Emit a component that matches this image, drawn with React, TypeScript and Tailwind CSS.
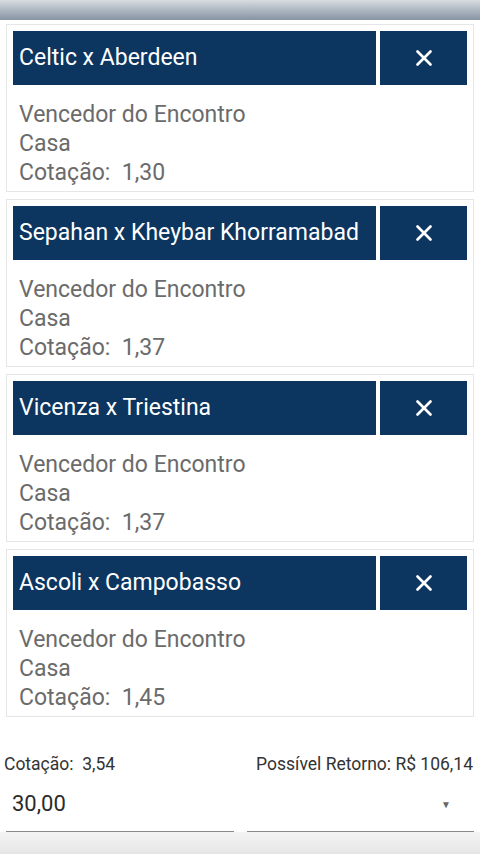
import { X } from "lucide-react";

const bets = [
  { match: "Celtic x Aberdeen", market: "Vencedor do Encontro", pick: "Casa", odd: "1,30" },
  { match: "Sepahan x Kheybar Khorramabad", market: "Vencedor do Encontro", pick: "Casa", odd: "1,37" },
  { match: "Vicenza x Triestina", market: "Vencedor do Encontro", pick: "Casa", odd: "1,37" },
  { match: "Ascoli x Campobasso", market: "Vencedor do Encontro", pick: "Casa", odd: "1,45" },
];

const BetCard = ({ match, market, pick, odd }: (typeof bets)[number]) => (
  <div className="border border-[#e6e6e6] px-[6px] pt-[6px] pb-[4px]">
    <div className="flex gap-[4px] h-[54px]">
      <div className="flex-1 bg-[#0c3560] text-white text-[23px] flex items-center pl-[6px] whitespace-nowrap overflow-hidden">
        {match}
      </div>
      <button className="w-[87px] bg-[#0c3560] text-white flex items-center justify-center">
        <X size={26} strokeWidth={2.5} />
      </button>
    </div>
    <div className="pl-[6px] pt-[15px] text-[#6b6b6b] text-[23px] leading-[29px]">
      <div>{market}</div>
      <div>{pick}</div>
      <div>Cotação:&nbsp; {odd}</div>
    </div>
  </div>
);

export default function App() {
  return (
    <div
      className="w-[480px] h-[854px] bg-white flex flex-col overflow-hidden"
      style={{ fontFamily: "Roboto, 'Noto Sans', sans-serif" }}
    >
      <div className="h-[20px] bg-gradient-to-b from-[#d7dce1] to-[#8794a2]" />
      <div className="px-[6px] pt-[4px] flex flex-col gap-[7px]">
        {bets.map((b) => (
          <BetCard key={b.match} {...b} />
        ))}
      </div>
      <div className="flex justify-between items-center pl-[4px] pr-[7px] pt-[35px] text-[17.5px] leading-[24px] text-[#333]">
        <span>Cotação:&nbsp; 3,54</span>
        <span>Possível Retorno: R$ 106,14</span>
      </div>
      <div className="grid grid-cols-2 gap-[13px] px-[6px] pt-[14px]">
        <div className="border-b border-[#8a8a8a] pl-[6px] pb-[13px] text-[22px] leading-[28px] text-[#2b2b2b]">
          30,00
        </div>
        <div className="border-b border-[#8a8a8a] flex items-center justify-end pr-[23px] pb-[13px]">
          <span className="text-[10px] text-[#666]">▼</span>
        </div>
      </div>
      <div className="flex-1 bg-gradient-to-b from-[#f4f4f4] to-[#e6e6e6]" />
    </div>
  );
}
